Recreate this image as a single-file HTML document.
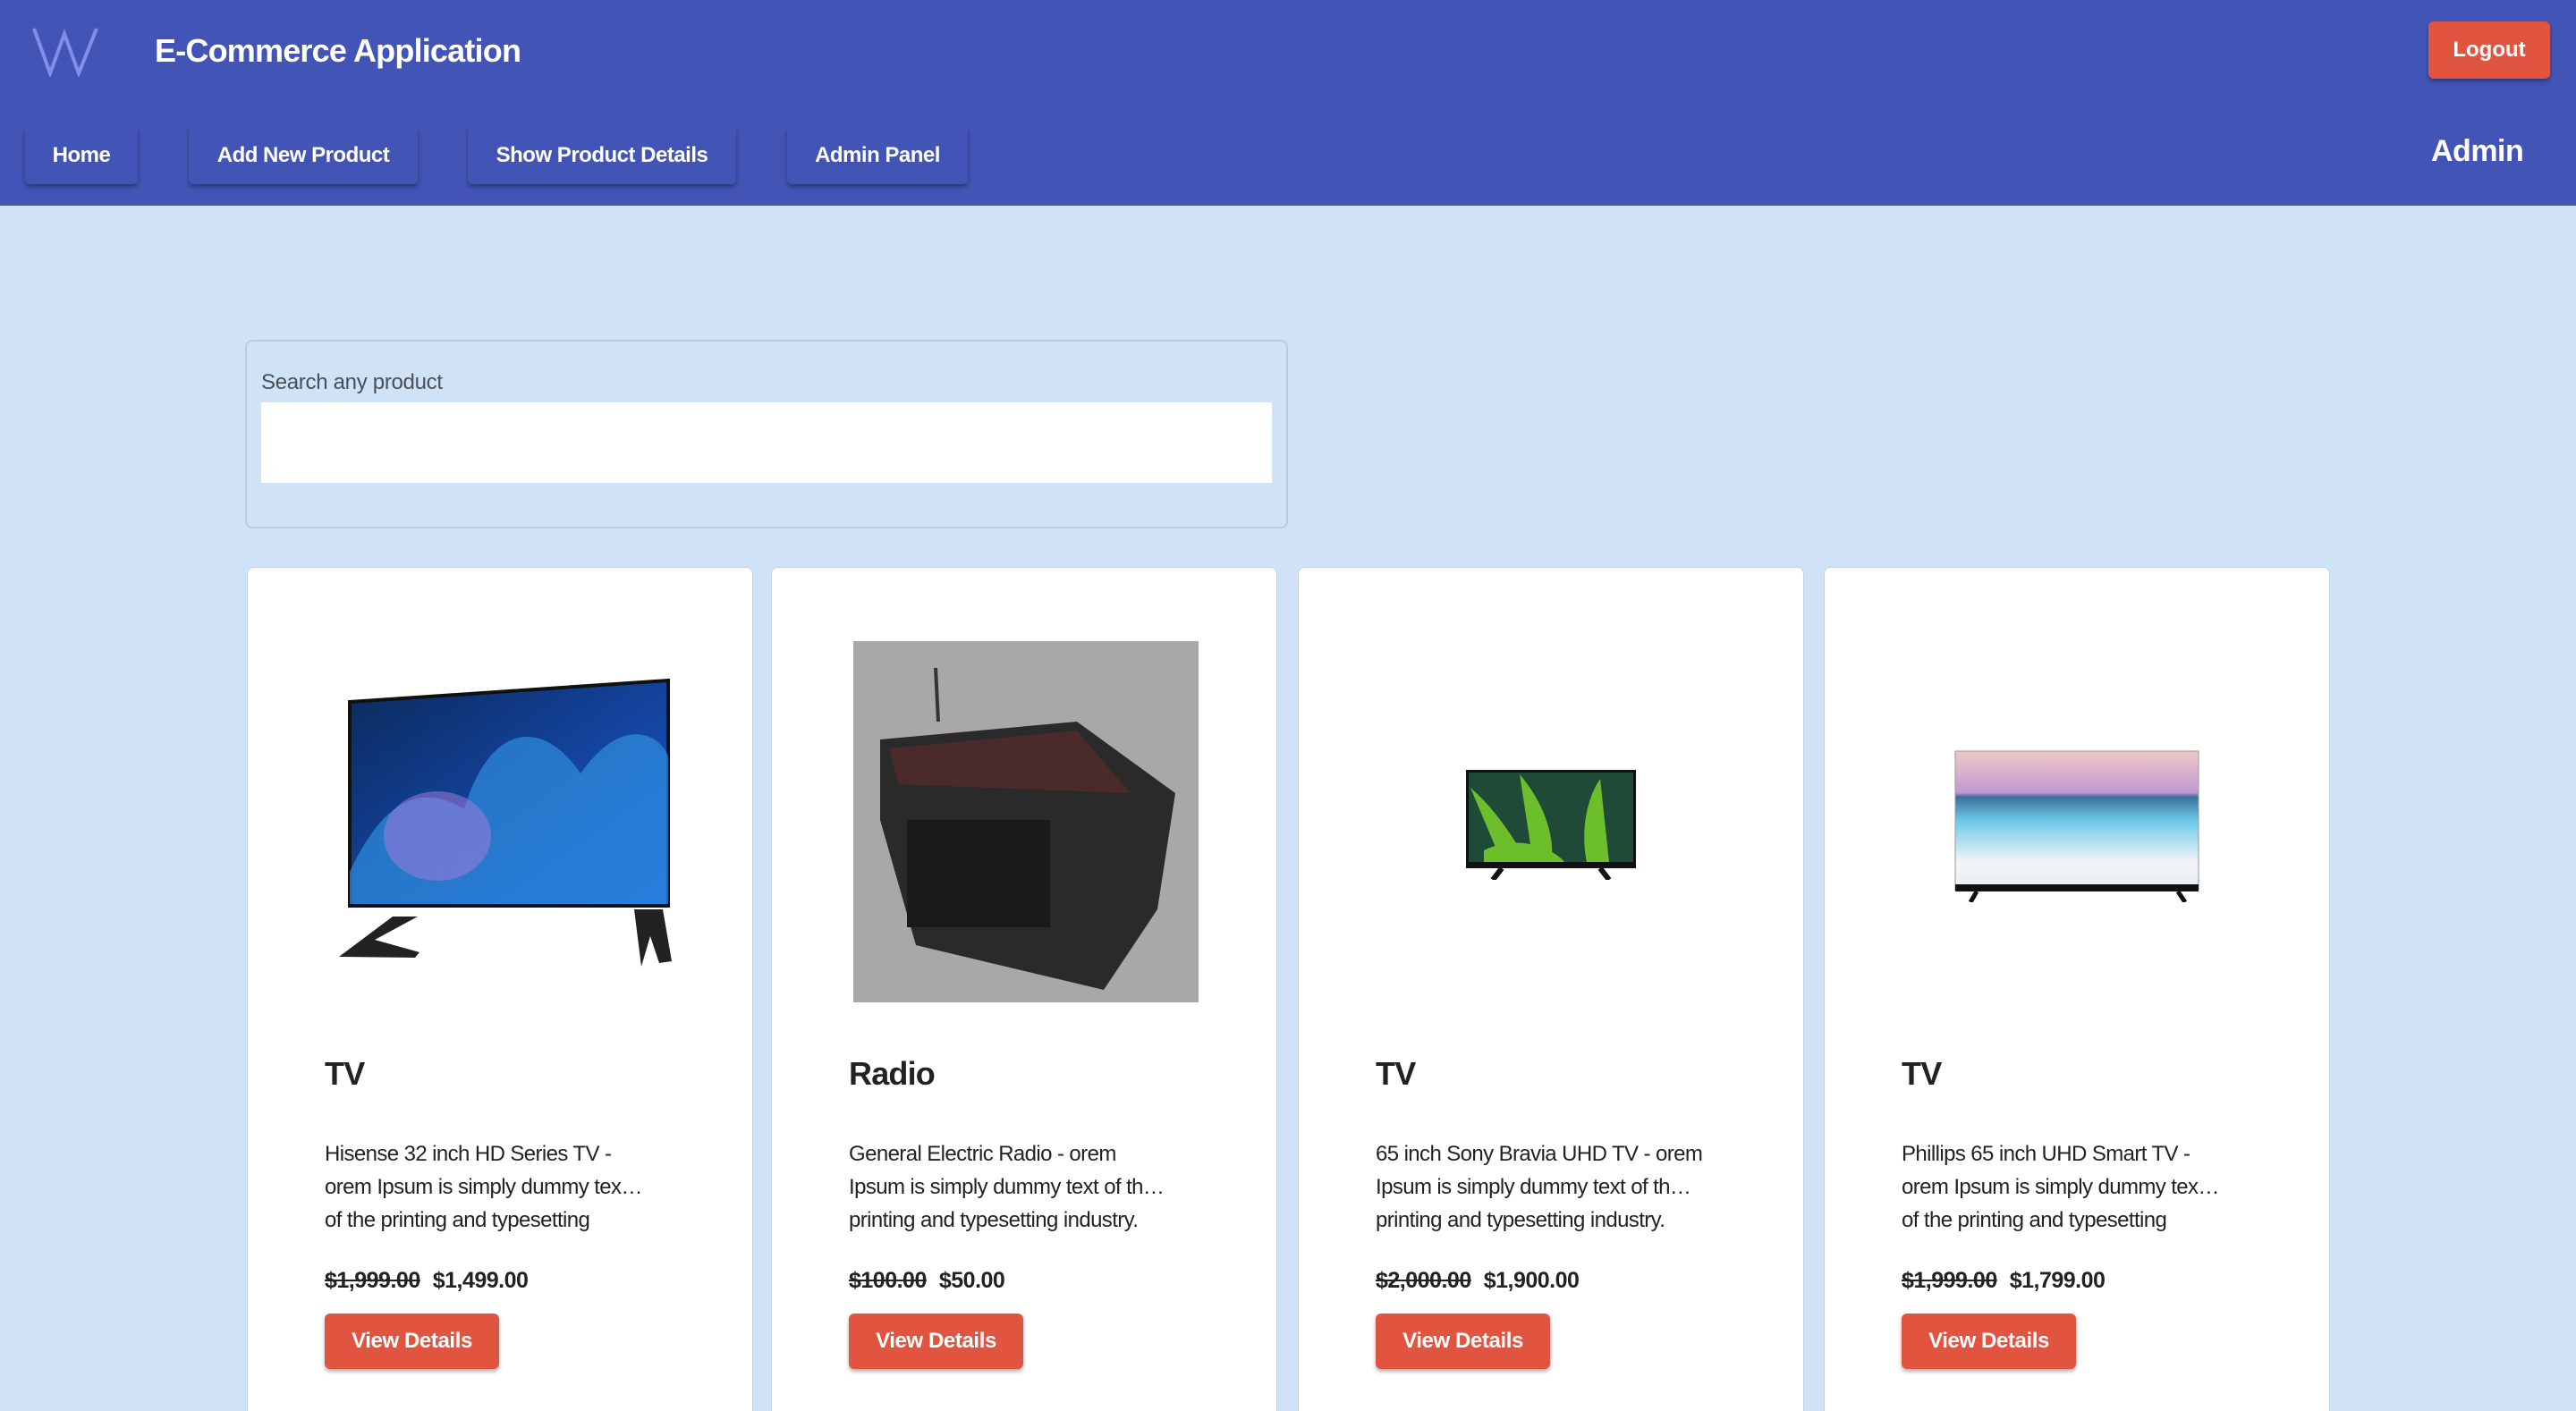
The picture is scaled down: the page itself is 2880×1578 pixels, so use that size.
<!DOCTYPE html>
<html style="width:2880px;height:1578px;overflow:hidden"><head><meta charset="utf-8"><style>
*{margin:0;padding:0;box-sizing:border-box}
body{width:2880px;height:1578px;overflow:hidden;background:#d0e2f5;font-family:"Liberation Sans",sans-serif;position:relative}
.hdr{position:absolute;left:0;top:0;width:2880px;height:230px;background:#4254b5}
.abs{position:absolute}
.title{left:173px;top:36px;font-size:36px;color:#fff;font-weight:bold;letter-spacing:-0.8px}
.nav{position:absolute;top:141px;height:65px;background:#4254b5;border-radius:5px;box-shadow:0 3px 5px rgba(0,0,0,.35);color:#fff;font-weight:bold;font-size:24px;display:flex;align-items:center;justify-content:center;letter-spacing:-0.5px}
.logout{left:2715px;top:24px;width:136px;height:64px;background:#e05440;border-radius:6px;color:#fff;font-weight:bold;font-size:24px;display:flex;align-items:center;justify-content:center;box-shadow:0 3px 5px rgba(0,0,0,.3)}
.admin{left:2718px;top:150px;font-size:34px;color:#fff;font-weight:bold;letter-spacing:-0.5px}
.search{left:274px;top:380px;width:1166px;height:211px;border:2px solid #b8cce0;border-radius:8px}
.search .lbl{position:absolute;left:16px;top:32px;font-size:24px;color:#4a4f57;letter-spacing:-0.3px}
.search .in{position:absolute;left:16px;top:68px;width:1130px;height:90px;background:#fff}
.card{position:absolute;top:634px;width:566px;height:944px;background:#fff;border-radius:8px 8px 0 0;border:1px solid #c5d3e3;border-bottom:none}
.card h2{position:absolute;left:86px;top:545px;font-size:36px;font-weight:bold;color:#222;letter-spacing:-0.8px}
.card .d{position:absolute;left:86px;top:637px;white-space:nowrap;font-size:24px;line-height:37px;color:#222;letter-spacing:-0.6px}
.card .p{position:absolute;left:86px;top:783px;font-size:25px;font-weight:bold;color:#222;letter-spacing:-0.5px}
.card .p s{margin-right:14px}
.card .b{position:absolute;left:86px;top:834px;width:195px;height:62px;background:#e05440;border-radius:6px;color:#fff;font-weight:bold;font-size:24px;display:flex;align-items:center;justify-content:center;box-shadow:0 3px 5px rgba(0,0,0,.3);letter-spacing:-0.4px}
</style></head><body>
<div class="hdr"></div>
<svg class="abs" style="left:34px;top:28px" width="80" height="58" viewBox="0 0 80 58"><path d="M4 4 L22 54 L38 10 L54 54 L74 4" fill="none" stroke="#7f90ea" stroke-width="4"/></svg>
<div class="abs title">E-Commerce Application</div>
<div class="abs logout">Logout</div>
<div class="nav" style="left:28px;width:126px">Home</div>
<div class="nav" style="left:211px;width:256px">Add New Product</div>
<div class="nav" style="left:523px;width:300px">Show Product Details</div>
<div class="nav" style="left:880px;width:202px">Admin Panel</div>
<div class="abs admin">Admin</div>
<div class="abs search"><div class="lbl">Search any product</div><div class="in"></div></div>

<div class="card" style="left:276px">
<svg class="abs" style="left:92px;top:120px" width="400" height="340" viewBox="0 0 400 340">
<defs><linearGradient id="g1" x1="0" y1="0" x2="1" y2="1"><stop offset="0" stop-color="#0b2a5c"/><stop offset="1" stop-color="#1a5ad8"/></linearGradient></defs>
<path d="M22 30 L378 6 L378 258 L22 258 Z" fill="url(#g1)" stroke="#111" stroke-width="4"/>
<path d="M22 220 C60 140,100 120,150 150 C180 50,240 50,280 110 C330 40,370 70,378 90 L378 256 L22 256 Z" fill="#2f8fe0" opacity=".7"/>
<ellipse cx="120" cy="180" rx="60" ry="50" fill="#a07ad8" opacity=".55"/>
<path d="M10 315 L70 270 L98 270 L50 296 L100 310 L95 316 Z" fill="#222"/>
<path d="M340 262 L372 262 L382 320 L368 322 L358 292 L348 326 Z" fill="#222"/>
</svg>
<h2>TV</h2>
<div class="d">Hisense 32 inch HD Series TV -<br>orem Ipsum is simply dummy tex…<br>of the printing and typesetting</div>
<div class="p"><s>$1,999.00</s>$1,499.00</div>
<div class="b">View Details</div>
</div>

<div class="card" style="left:862px">
<svg class="abs" style="left:91px;top:82px" width="386" height="404" viewBox="0 0 386 404">
<rect width="386" height="404" fill="#a8a8a8"/>
<line x1="92" y1="30" x2="95" y2="90" stroke="#333" stroke-width="4"/>
<path d="M30 110 L250 90 L360 170 L340 300 L280 390 L70 340 L30 200 Z" fill="#2a2a2a"/>
<path d="M40 120 L250 100 L310 170 L50 160 Z" fill="#4a2a2a"/>
<rect x="60" y="200" width="160" height="120" fill="#1a1a1a"/>
</svg>
<h2>Radio</h2>
<div class="d">General Electric Radio - orem<br>Ipsum is simply dummy text of th…<br>printing and typesetting industry.</div>
<div class="p"><s>$100.00</s>$50.00</div>
<div class="b">View Details</div>
</div>

<div class="card" style="left:1451px">
<svg class="abs" style="left:187px;top:226px" width="190" height="123" viewBox="0 0 190 123">
<rect x="0" y="0" width="190" height="110" fill="#111"/>
<rect x="3" y="3" width="184" height="100" fill="#1f4a38"/>
<path d="M5 20 C40 50,60 90,70 103 L40 103 Z M60 5 C90 40,100 80,95 103 L75 103 Z M150 10 C130 40,130 80,135 103 L160 103 Z M20 90 C60 70,100 90,110 103 L20 103 Z" fill="#6cbf2a"/>
<path d="M40 110 L30 123 M150 110 L160 123" stroke="#111" stroke-width="6"/>
</svg>
<h2>TV</h2>
<div class="d">65 inch Sony Bravia UHD TV - orem<br>Ipsum is simply dummy text of th…<br>printing and typesetting industry.</div>
<div class="p"><s>$2,000.00</s>$1,900.00</div>
<div class="b">View Details</div>
</div>

<div class="card" style="left:2039px">
<svg class="abs" style="left:145px;top:204px" width="274" height="170" viewBox="0 0 274 170">
<defs><linearGradient id="g4" x1="0" y1="0" x2="0" y2="1"><stop offset="0" stop-color="#f0c8c8"/><stop offset=".3" stop-color="#c09ad0"/><stop offset=".33" stop-color="#3a6f9a"/><stop offset=".5" stop-color="#6cc8e8"/><stop offset=".8" stop-color="#f4f4f8"/><stop offset="1" stop-color="#e8eef2"/></linearGradient></defs>
<rect x="1" y="1" width="272" height="155" fill="url(#g4)" stroke="#999"/>
<rect x="1" y="150" width="272" height="8" fill="#111"/>
<path d="M25 158 L18 170 M250 158 L258 170" stroke="#111" stroke-width="5"/>
</svg>
<h2>TV</h2>
<div class="d">Phillips 65 inch UHD Smart TV -<br>orem Ipsum is simply dummy tex…<br>of the printing and typesetting</div>
<div class="p"><s>$1,999.00</s>$1,799.00</div>
<div class="b">View Details</div>
</div>
</body></html>
